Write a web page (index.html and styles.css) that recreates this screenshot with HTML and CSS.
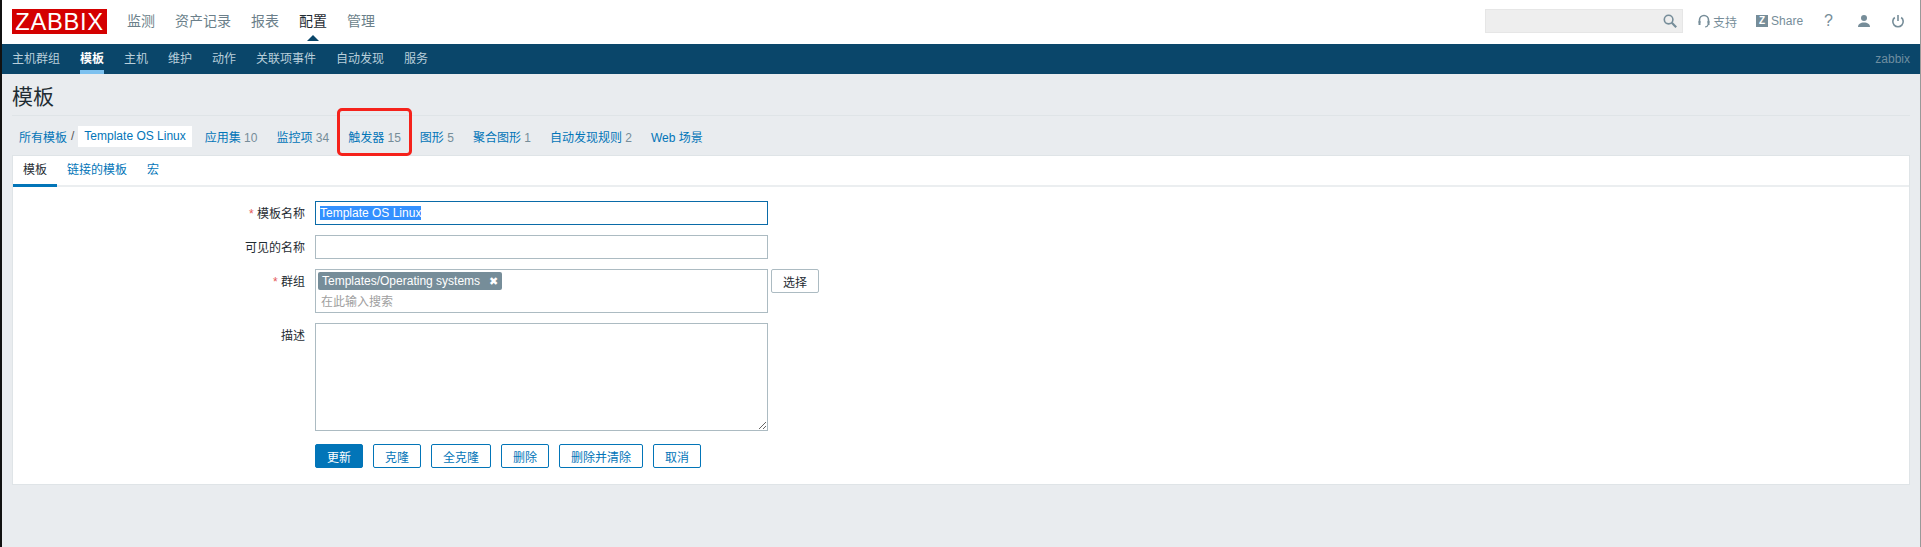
FILE: index.html
```html
<!DOCTYPE html>
<html lang="zh">
    <head>
        <meta charset="utf-8">
        <title>模板</title>
        <link rel="stylesheet" href="styles.css">
    </head>
    <body>
        <header class="top">
            <div class="logo">ZABBIX</div>
            <nav class="main-nav">
                <a>监测</a>
                <a>资产记录</a>
                <a>报表</a>
                <a class="selected">配置</a>
                <a>管理</a>
            </nav>
            <div class="top-right">
                <div class="search">
                    <svg width="14" height="14" viewBox="0 0 14 14" fill="none" stroke="#768d99" stroke-width="1.6"><circle cx="5.6" cy="5.6" r="4.3"/><path d="M8.8 8.8l4.4 4.4" stroke-width="2.2"/></svg>
                </div>
                <a class="tool support">
                    <svg width="12" height="14" viewBox="0 0 12 14" fill="none" stroke="#768d99" stroke-width="1.6"><path d="M1.5 9V6a4.5 4.5 0 0 1 9 0v3"/><rect x="0.5" y="7" width="2" height="4" fill="#768d99" stroke="none"/><rect x="9.5" y="7" width="2" height="4" fill="#768d99" stroke="none"/><path d="M10 11c-.5 1.500-1.500 2-3 2" stroke-width="1.200"/></svg>
                    支持
                </a>
                <a class="tool share"><span class="z-badge">Z</span>Share</a>
                <a class="tool help">?</a>
                <a class="tool user">
                    <svg width="14" height="14" viewBox="0 0 14 14" fill="#768d99"><circle cx="7" cy="4" r="3"/><path d="M1 13c0-3 2.500-4.500 6-4.500s6 1.500 6 4.500z"/></svg>
                </a>
                <a class="tool power">
                    <svg width="14" height="14" viewBox="0 0 14 14" fill="none" stroke="#768d99" stroke-width="1.600"><path d="M3.800 3.500a5.200 5.200 0 1 0 6.400 0"/><path d="M7 1v6"/></svg>
                </a>
            </div>
        </header>

        <nav class="sub-nav">
            <a>主机群组</a>
            <a class="selected">模板</a>
            <a>主机</a>
            <a>维护</a>
            <a>动作</a>
            <a>关联项事件</a>
            <a>自动发现</a>
            <a>服务</a>
            <span class="server-name">zabbix</span>
        </nav>

        <main class="content">
            <h1 class="title">模板</h1>

            <div class="crumbs">
                <a class="crumb-all">所有模板</a>
                <span class="slash">/</span>
                <a class="crumb-current">Template OS Linux</a>
                <a class="crumb">应用集 <span>10</span></a>
                <a class="crumb">监控项 <span>34</span></a>
                <a class="crumb marked">触发器 <span>15</span><i class="red-box"></i></a>
                <a class="crumb">图形 <span>5</span></a>
                <a class="crumb">聚合图形 <span>1</span></a>
                <a class="crumb">自动发现规则 <span>2</span></a>
                <a class="crumb">Web 场景</a>
            </div>

            <section class="card">
                <div class="tabs">
                    <a class="active">模板</a>
                    <a>链接的模板</a>
                    <a>宏</a>
                </div>

                <div class="form">
                    <div class="row">
                        <label class="row-label"><b>*</b> 模板名称</label>
                        <div class="text-field focused"><span class="picked">Template OS Linux</span></div>
                    </div>
                    <div class="row">
                        <label class="row-label">可见的名称</label>
                        <input class="text-field" type="text">
                    </div>
                    <div class="row">
                        <label class="row-label"><b>*</b> 群组</label>
                        <div class="multi">
                            <span class="tag">Templates/Operating systems <em>✖</em></span>
                            <span class="hint">在此输入搜索</span>
                        </div>
                        <button class="plain pick">选择</button>
                    </div>
                    <div class="row">
                        <label class="row-label">描述</label>
                        <textarea class="notes"></textarea>
                    </div>
                    <div class="actions">
                        <button class="primary">更新</button>
                        <button class="outline">克隆</button>
                        <button class="outline">全克隆</button>
                        <button class="outline">删除</button>
                        <button class="outline">删除并清除</button>
                        <button class="outline">取消</button>
                    </div>
                </div>
            </section>
        </main>
    </body>
</html>
```

FILE: styles.css
```css
html {
    height: 100%;
}
body {
    margin: 0;
    height: 547px;
    overflow: hidden;
    box-sizing: border-box;
    border-left: 2px solid #111;
    border-right: 1px solid #999;
    background-color: #e9ecef;
    color: #1f2c33;
    font-family: "Liberation Sans", "Noto Sans CJK SC", sans-serif;
    font-size: 12px;
}
a {
    cursor: pointer;
}

/* top bar */
.top {
    height: 44px;
    background-color: #fff;
    display: flex;
    align-items: center;
    padding-left: 10px;
}
.logo {
    width: 95px;
    height: 25px;
    margin-top: -1px;
    background-color: #d40000;
    color: #fff;
    font-size: 23.7px;
    line-height: 26px;
    text-align: center;
    letter-spacing: 0.7px;
}
.main-nav {
    display: flex;
    gap: 20px;
    margin-left: 20px;
    margin-top: -4px;
    font-size: 14px;
    color: #6b7f8a;
}
.main-nav .selected {
    color: #1f2c33;
}
.main-nav a {
    position: relative;
}
.main-nav .selected::after {
    content: "";
    position: absolute;
    left: 8px;
    bottom: -11px;
    border: 6px solid transparent;
    border-top: 0;
    border-bottom: 6px solid #0a466a;
}
.top-right {
    margin-left: auto;
    display: flex;
    align-items: center;
    color: #768d99;
}
.search {
    width: 198px;
    height: 24px;
    margin-top: -2px;
    box-sizing: border-box;
    background-color: #eee;
    border: 1px solid #e6e6e6;
    display: flex;
    align-items: center;
    justify-content: flex-end;
    padding-right: 5px;
}
.tool {
    display: flex;
    align-items: center;
    gap: 3px;
    white-space: nowrap;
    margin-top: -2px;
}
.support {
    margin-left: 15px;
}
.share {
    margin-left: 19px;
}
.z-badge {
    width: 12px;
    height: 12px;
    background-color: #768d99;
    color: #fff;
    font-size: 10px;
    font-weight: bold;
    line-height: 12px;
    text-align: center;
}
.help {
    margin-left: 21px;
    font-size: 16px;
}
.user {
    margin-left: 24px;
}
.power {
    margin-left: 20px;
    margin-right: 15px;
}

/* second bar */
.sub-nav {
    height: 30px;
    background-color: #0a466a;
    display: flex;
    align-items: center;
    gap: 20px;
    padding: 0 10px;
    color: #b9cfdb;
}
.sub-nav a {
    height: 30px;
    line-height: 30px;
    box-sizing: border-box;
}
.sub-nav .selected {
    color: #fff;
    font-weight: bold;
    border-bottom: 4px solid #7dc1ef;
}
.server-name {
    margin-left: auto;
    color: #6f8ea0;
}

/* page body */
.content {
    padding: 0 10px;
}
.title {
    margin: 0;
    height: 41px;
    line-height: 45px;
    font-size: 21px;
    font-weight: normal;
    border-bottom: 1px solid #dfe4e7;
}
.crumbs {
    height: 38px;
    padding: 1px 0 0 7px;
    display: flex;
    align-items: center;
    color: #0275b8;
}
.slash {
    margin-left: 4px;
    color: #555;
}
.crumb-current {
    margin-left: 4px;
    padding: 0 6px;
    height: 21px;
    line-height: 21px;
    background-color: #fff;
}
.crumb {
    margin-left: 19px;
}
.crumb-current + .crumb {
    margin-left: 13px;
}
.crumb span {
    color: #768d99;
}
.marked {
    position: relative;
}
.red-box {
    position: absolute;
    left: -11px;
    top: -20px;
    width: 75px;
    height: 48px;
    box-sizing: border-box;
    border: 3px solid #f5221b;
    border-radius: 5px;
}

/* card */
.card {
    height: 330px;
    box-sizing: border-box;
    background-color: #fff;
    border: 1px solid #dfe4e7;
}
.tabs {
    height: 31px;
    box-sizing: border-box;
    display: flex;
    gap: 20px;
    padding-left: 0;
    border-bottom: 2px solid #ebeef0;
    color: #0275b8;
}
.tabs a {
    line-height: 29px;
}
.tabs .active {
    width: 44px;
    height: 31px;
    box-sizing: border-box;
    margin-right: -10px;
    text-align: center;
    color: #1f2c33;
    border-bottom: 3px solid #0275b8;
}
.form {
    display: flex;
    flex-direction: column;
    padding-top: 14px;
}
.row {
    display: flex;
    align-items: flex-start;
    margin-bottom: 10px;
}
.row-label {
    width: 292px;
    padding-top: 3px;
    text-align: right;
    margin-right: 10px;
}
.row-label b {
    color: #e45959;
    font-weight: normal;
}
.text-field {
    width: 453px;
    height: 24px;
    box-sizing: border-box;
    margin: 0;
    padding: 0 4px;
    border: 1px solid #acbbc2;
    background-color: #fff;
    font: inherit;
    line-height: 22px;
    outline: none;
}
.text-field.focused {
    border-color: #0a6ba8;
}
.picked {
    background-color: #3390ff;
    color: #fff;
}
.multi {
    width: 453px;
    height: 44px;
    box-sizing: border-box;
    border: 1px solid #acbbc2;
    padding: 2px 2px 0;
    display: flex;
    flex-direction: column;
    align-items: flex-start;
}
.tag {
    height: 18px;
    line-height: 18px;
    padding: 0 4px;
    border-radius: 2px;
    background-color: #768d99;
    color: #fff;
}
.tag em {
    margin-left: 6px;
    font-style: normal;
    font-size: 11px;
}
.hint {
    margin: 2px 0 0 3px;
    color: #a0a0a0;
}
button {
    font-family: inherit;
    font-size: 12px;
    height: 24px;
    box-sizing: border-box;
    margin: 0;
    padding: 0 11px;
    border-radius: 2px;
    cursor: pointer;
}
.plain {
    margin-left: 3px;
    background-color: #fff;
    border: 1px solid #acbbc2;
    color: #1f2c33;
}
.notes {
    width: 453px;
    height: 108px;
    box-sizing: border-box;
    margin: 0;
    border: 1px solid #acbbc2;
    outline: none;
    display: block;
}
.actions {
    display: flex;
    gap: 10px;
    margin: 3px 0 0 302px;
}
.primary {
    background-color: #0275b8;
    border: 1px solid #0275b8;
    color: #fff;
}
.outline {
    background-color: #fff;
    border: 1px solid #0275b8;
    color: #0275b8;
}
```
